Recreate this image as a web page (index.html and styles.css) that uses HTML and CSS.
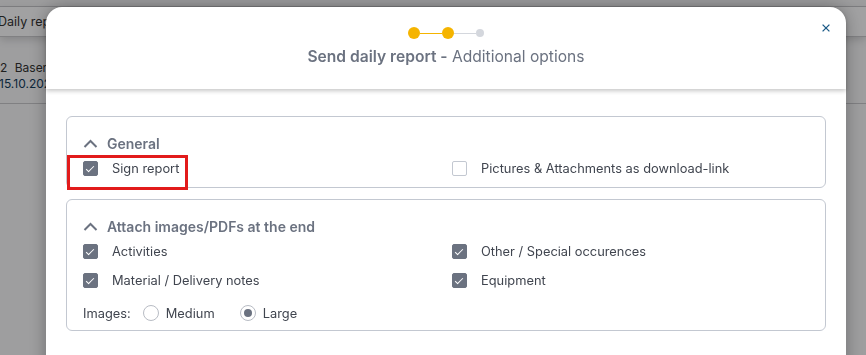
FILE: index.html
```html
<!DOCTYPE html>
<html lang="en">
<head>
  <meta charset="UTF-8">
  <meta name="viewport" content="width=device-width, initial-scale=1.0">
  <title>Send daily report</title>
  <link rel="stylesheet" href="styles.css">
</head>
<body>
  <!-- page behind the dialog -->
  <div class="page">
    <div class="topbar"></div>
    <div class="tabs"><span class="tab">Daily report</span></div>
    <div class="list-row">
      <div class="list-title"><span class="num">2</span> Basement walls</div>
      <div class="list-date">15.10.2023</div>
    </div>
  </div>
  <div class="backdrop"></div>

  <div class="modal">
    <div class="modal-head">
      <div class="stepper">
        <span class="dot done"></span>
        <span class="line done"></span>
        <span class="dot done"></span>
        <span class="line"></span>
        <span class="dot small"></span>
      </div>
      <h2 class="modal-title"><strong>Send daily report -</strong> Additional options</h2>
      <button class="close" aria-label="Close">
        <svg width="8" height="8" viewBox="0 0 8 8"><path d="M0.6 0.6L7.4 7.4M7.4 0.6L0.6 7.4" stroke="currentColor" stroke-width="1.3" fill="none"/></svg>
      </button>
    </div>

    <div class="modal-body">
      <section class="panel">
        <div class="panel-head">
          <svg class="chevron" width="15" height="9" viewBox="0 0 15 9"><path d="M1.5 8L7.5 2L13.5 8" stroke="currentColor" stroke-width="2" fill="none"/></svg>
          <span>General</span>
        </div>
        <div class="grid">
          <label class="check">
            <span class="box checked"></span>Sign report
            <span class="highlight"></span>
          </label>
          <label class="check"><span class="box"></span>Pictures &amp; Attachments as download-link</label>
        </div>
      </section>

      <section class="panel">
        <div class="panel-head">
          <svg class="chevron" width="15" height="9" viewBox="0 0 15 9"><path d="M1.5 8L7.5 2L13.5 8" stroke="currentColor" stroke-width="2" fill="none"/></svg>
          <span>Attach images/PDFs at the end</span>
        </div>
        <div class="grid">
          <label class="check"><span class="box checked"></span>Activities</label>
          <label class="check"><span class="box checked"></span>Other / Special occurences</label>
          <label class="check"><span class="box checked"></span>Material / Delivery notes</label>
          <label class="check"><span class="box checked"></span>Equipment</label>
        </div>
        <div class="sizes">
          <span class="sizes-label">Images:</span>
          <label class="radio"><span class="circle"></span>Medium</label>
          <label class="radio"><span class="circle on"></span>Large</label>
        </div>
      </section>
    </div>
  </div>
</body>
</html>
```

FILE: styles.css
```css
:root {
  --text: #40454f;
  --muted: #6b7280;
  --border: #c3c8d1;
  --yellow: #f5b400;
  --step-grey: #d4d7dd;
  --close: #1b5a87;
}
* { box-sizing: border-box; }
body {
  margin: 0;
  font-family: 'Inter', sans-serif;
  color: var(--text);
  background: #f4f4f6;
  overflow: hidden;
}

/* background page */
.page {
  height: 355px;
  background: #f7f7f9;
}
.topbar {
  height: 7px;
  background: #f4f4f6;
  border-bottom: 1px solid #c8c8cc;
}
.tabs {
  height: 30px;
  display: flex;
  align-items: center;
  background: #fcfcfd;
  border-bottom: 1px solid #c8c8cc;
  box-shadow: 0 3px 8px rgba(0,0,0,0.15);
  font-size: 12.5px;
  color: #333;
}
.tab { margin-left: -2px; }
.list-row {
  margin-top: 23px;
  height: 44px;
  border-bottom: 1px solid #c8c8cc;
  font-size: 12px;
  line-height: 16px;
}
.list-title { color: #333; }
.list-title .num { margin-right: 4px; }
.list-date { color: #123c5c; margin-left: -1px; }
.backdrop {
  position: fixed;
  inset: 0;
  background: rgba(0,0,0,0.36);
}

/* dialog */
.modal {
  position: fixed;
  left: 46px;
  top: 7px;
  width: 800px;
  bottom: -40px;
  background: #fff;
  border-radius: 16px 16px 0 0;
  box-shadow: 0 0 18px rgba(0,0,0,0.3);
}
.modal-head {
  position: relative;
  height: 82px;
  padding-top: 20px;
  border-radius: 16px 16px 0 0;
  box-shadow: 0 2px 4px rgba(0,0,0,0.22);
}
.stepper {
  display: flex;
  align-items: center;
  justify-content: center;
  height: 12px;
}
.dot {
  width: 12px;
  height: 12px;
  border-radius: 50%;
  background: var(--yellow);
}
.dot.small {
  width: 8px;
  height: 8px;
  background: var(--step-grey);
}
.line {
  width: 22px;
  height: 1px;
  background: var(--step-grey);
}
.line.done { background: var(--yellow); }
.modal-title {
  margin: 8px 0 0;
  text-align: center;
  font-size: 15.6px;
  line-height: 20px;
  font-weight: 400;
  color: var(--muted);
}
.modal-title strong { font-weight: 600; }
.close {
  position: absolute;
  top: 17px;
  right: 16px;
  width: 8px;
  height: 8px;
  padding: 0;
  border: none;
  background: none;
  color: var(--close);
  display: flex;
}

.modal-body {
  padding: 27px 20px 0;
  display: flex;
  flex-direction: column;
  gap: 11px;
}
.panel {
  border: 1px solid var(--border);
  border-radius: 6px;
  padding: 16px 16px 4px;
}
.panel-head {
  display: flex;
  align-items: center;
  height: 20px;
  margin-bottom: 1px;
  font-size: 14px;
  font-weight: 600;
  color: var(--muted);
}
.chevron {
  margin: 0 9px 0 0;
  color: var(--muted);
}
.grid {
  display: grid;
  grid-template-columns: 1fr 1fr;
  column-gap: 12px;
}
.check {
  position: relative;
  display: flex;
  align-items: center;
  height: 29px;
  font-size: 12.85px;
}
.box {
  width: 15px;
  height: 15px;
  margin-right: 14px;
  border: 1px solid var(--border);
  border-radius: 2px;
  background: #fff;
  position: relative;
}
.box.checked {
  background: var(--muted);
  border-color: var(--muted);
}
.box.checked::after {
  content: "";
  position: absolute;
  left: 4px;
  top: 2px;
  width: 3px;
  height: 7px;
  border: solid #fff;
  border-width: 0 1.5px 1.5px 0;
  transform: rotate(45deg);
}
.highlight {
  position: absolute;
  left: -16px;
  top: 1px;
  width: 121px;
  height: 35px;
  border: 3px solid #e21b1b;
}
.sizes {
  display: flex;
  align-items: center;
  height: 26px;
  margin-top: 5px;
  font-size: 12.85px;
}
.sizes-label { margin-right: 12px; }
.radio {
  display: flex;
  align-items: center;
  margin-right: 25px;
}
.circle {
  width: 16px;
  height: 16px;
  margin-right: 7px;
  border: 1px solid #b8bcc4;
  border-radius: 50%;
  display: flex;
  align-items: center;
  justify-content: center;
}
.circle.on::after {
  content: "";
  width: 8px;
  height: 8px;
  border-radius: 50%;
  background: var(--muted);
}
```
